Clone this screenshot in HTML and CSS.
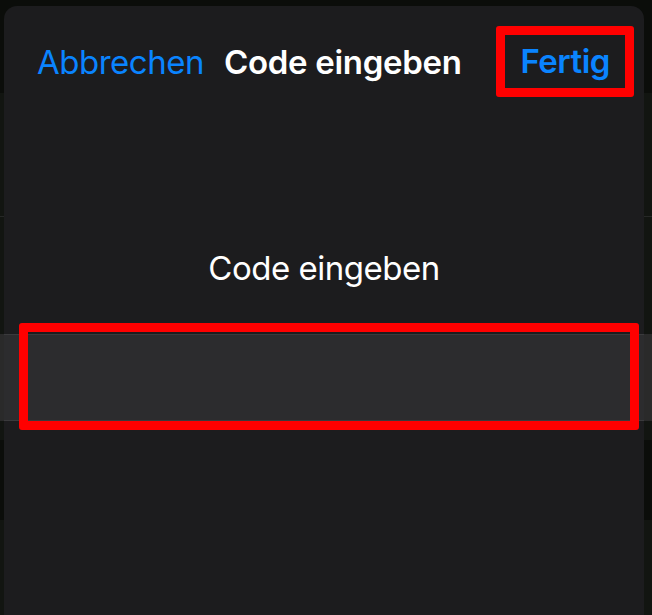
FILE: index.html
```html
<!DOCTYPE html>
<html lang="de">
<head>
<meta charset="utf-8">
<title>Code eingeben</title>
<link rel="stylesheet" href="styles.css">
</head>
<body>
<div class="backdrop">
  <div class="sheet">
    <header class="nav">
      <span class="nav-cancel">Abbrechen</span>
      <span class="nav-title">Code eingeben</span>
      <span class="nav-done">Fertig</span>
    </header>
    <main class="content">
      <div class="prompt">Code eingeben</div>
      <div class="field">
        <div class="highlight"></div>
      </div>
    </main>
  </div>
</div>
</body>
</html>
```

FILE: styles.css
```css
html, body {
  margin: 0;
  padding: 0;
}

body {
  width: 652px;
  height: 615px;
  overflow: hidden;
  font-family: Inter, "Noto Sans", "Liberation Sans", sans-serif;
  background:
    linear-gradient(to bottom,
      #0b0d0a 0px, #0b0d0a 93px,
      #121511 93px, #121511 216px,
      #262826 216px, #262826 217px,
      #121511 217px, #121511 334px,
      #2a2a2a 334px, #2a2a2a 421px,
      #121511 421px, #121511 440px,
      #0b0d0a 440px, #0b0d0a 520px,
      #121511 520px, #121511 615px);
}

.backdrop {
  padding: 6px 8px 0 4px;
  height: 609px;
}

.sheet {
  height: 100%;
  background: #1c1c1e;
  border-radius: 13px 13px 0 0;
  display: flex;
  flex-direction: column;
}

.nav {
  display: flex;
  align-items: center;
  padding: 20px 10px 0 33px;
  height: 71px;
  font-size: 33px;
  letter-spacing: -0.5px;
}

.nav-cancel {
  color: #0a84ff;
  font-weight: 400;
  margin-right: 20px;
}

.nav-title {
  color: #ffffff;
  font-weight: 600;
  letter-spacing: -0.3px;
}

.nav-done {
  margin-left: auto;
  color: #0a84ff;
  font-weight: 600;
  border: 9px solid #ff0000;
  border-radius: 3px;
  padding: 0 15px 0 16px;
  height: 53px;
  line-height: 53px;
}

.content {
  display: flex;
  flex-direction: column;
}

.prompt {
  margin-top: 151px;
  height: 40px;
  line-height: 40px;
  text-align: center;
  color: #ffffff;
  font-size: 33px;
  letter-spacing: -0.5px;
  font-weight: 400;
}

.field {
  position: relative;
  margin-top: 46px;
  height: 85px;
  background: #2c2c2e;
  border-top: 1px solid #3a3a3c;
  border-bottom: 1px solid #3a3a3c;
}

.highlight {
  position: absolute;
  left: 15px;
  right: 5px;
  top: -12px;
  bottom: -10px;
  border: 9px solid #ff0000;
  border-radius: 3px;
}
```
